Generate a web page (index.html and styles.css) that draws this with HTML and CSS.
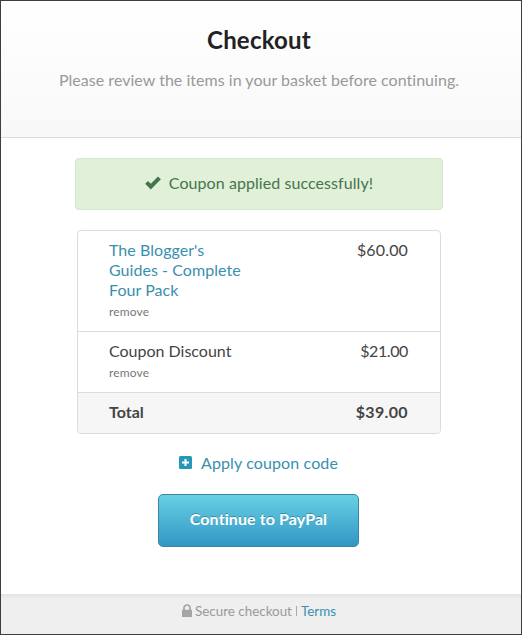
FILE: index.html
```html
<!DOCTYPE html>
<html lang="en">
<head>
  <meta charset="utf-8">
  <meta name="viewport" content="width=device-width, initial-scale=1">
  <title>Checkout</title>
  <link rel="stylesheet" href="styles.css">
</head>
<body>
  <div class="page">
    <header class="header">
      <h1>Checkout</h1>
      <p>Please review the items in your basket before continuing.</p>
    </header>

    <main class="content">
      <div class="alert">
        <svg class="icon-check" width="16" height="14" viewBox="0 0 16 14"><path d="M0.2 7.8 L3 5 L5.8 7.8 L13 0.5 L15.9 3.3 L5.8 13.4 Z" fill="currentColor"/></svg>
        <span>Coupon applied successfully!</span>
      </div>

      <div class="basket">
        <div class="row">
          <div class="item">
            <a href="#" class="name-link">The Blogger's Guides - Complete Four Pack</a>
            <a href="#" class="remove">remove</a>
          </div>
          <div class="price">$60.00</div>
        </div>
        <div class="row">
          <div class="item">
            <span class="name-discount">Coupon Discount</span>
            <a href="#" class="remove">remove</a>
          </div>
          <div class="price price-discount">$21.00</div>
        </div>
        <div class="row total">
          <div class="item">Total</div>
          <div class="price">$39.00</div>
        </div>
      </div>

      <a href="#" class="coupon">
        <svg width="13" height="13" viewBox="0 0 13 13"><rect width="13" height="13" rx="1.5" fill="#2698b5"/><path d="M6.5 3v7M3 6.5h7" stroke="#fff" stroke-width="2"/></svg>
        <span>Apply coupon code</span>
      </a>

      <button type="button" class="btn">Continue to PayPal</button>
    </main>

    <footer class="footer">
      <svg width="10" height="13" viewBox="0 0 10 13"><path d="M2 6V4a3 3 0 0 1 6 0v2" fill="none" stroke="#a5a5a5" stroke-width="1.7"/><rect y="5.7" width="10" height="7.3" rx="0.6" fill="#a5a5a5"/></svg>
      <span class="secure">Secure checkout</span>
      <span class="sep"></span>
      <a href="#">Terms</a>
    </footer>
  </div>
</body>
</html>
```
FILE: styles.css
```css
* {
  box-sizing: border-box;
}
body {
  margin: 0;
  font-family: Lato, "Open Sans", sans-serif;
  font-size: 16px;
  line-height: 20px;
  font-variant-ligatures: none;
  color: #444;
  background: #fff;
}
a {
  color: #3a8fb0;
  text-decoration: none;
}
.page {
  display: flex;
  flex-direction: column;
  height: 635px;
  border: 1px solid #403d40;
}
.header {
  height: 137px;
  padding: 24px 4px 0 0;
  text-align: center;
  border-bottom: 1px solid #dcdcdc;
  background: linear-gradient(#fff, #f8f8f8);
}
h1 {
  margin: 0;
  font-size: 24px;
  line-height: 30px;
  font-weight: bold;
  letter-spacing: 0.2px;
  color: #222;
}
.header p {
  margin: 15px 0 0;
  letter-spacing: 0.03px;
  color: #999;
}
.content {
  flex: 1;
  display: flex;
  flex-direction: column;
  align-items: center;
  padding: 20px 4px 0 0;
}
.alert {
  display: flex;
  align-items: center;
  justify-content: center;
  gap: 8px;
  width: 368px;
  height: 52px;
  padding-bottom: 2px;
  border: 1px solid #d3e8c8;
  border-radius: 4px;
  background: #e0f0d9;
  color: #47754a;
  letter-spacing: 0.07px;
}
.icon-check {
  margin-top: -1px;
}
.basket {
  width: 364px;
  margin-top: 20px;
  border: 1px solid #dcdcdc;
  border-radius: 4px;
  overflow: hidden;
}
.row {
  display: flex;
  justify-content: space-between;
  padding: 9px 32px 11px 31px;
}
.row + .row {
  border-top: 1px solid #dcdcdc;
}
.item {
  width: 145px;
}
.name-link,
.name-discount,
.remove {
  display: block;
}
.name-link {
  letter-spacing: 0.05px;
}
.remove {
  padding-top: 2px;
  height: 20px;
  font-size: 12px;
  letter-spacing: 0.15px;
  color: #777;
}
.price {
  letter-spacing: 0.15px;
}
.price-discount {
  letter-spacing: -0.4px;
}
.total {
  background: #f6f6f6;
  font-weight: bold;
}
.total .price {
  letter-spacing: 0.35px;
}
.coupon {
  display: flex;
  align-items: center;
  gap: 9px;
  margin-top: 19px;
  padding-right: 1px;
  letter-spacing: 0.12px;
}
.coupon svg {
  margin-top: -1px;
}
.btn {
  width: 201px;
  height: 53px;
  margin: 21px 1px 0 0;
  padding: 0 0 4px;
  border: 1px solid #3a86a3;
  border-radius: 5px;
  background: linear-gradient(#67d0e3, #3396c6);
  color: #fff;
  font-family: inherit;
  font-size: 16px;
  font-weight: bold;
  letter-spacing: 0.1px;
  text-shadow: 0 -1px 0 rgba(0, 0, 0, 0.25);
}
.footer {
  display: flex;
  align-items: center;
  justify-content: center;
  height: 40px;
  padding: 0 4px 6px 0;
  background: linear-gradient(#e3e3e3, #efefef 5px);
  color: #999;
  font-size: 13.4px;
}
.footer svg {
  margin-top: -1px;
}
.secure {
  margin-left: 3px;
}
.sep {
  width: 1px;
  height: 10px;
  margin: 0 4px;
  background: #aaa;
}
```
